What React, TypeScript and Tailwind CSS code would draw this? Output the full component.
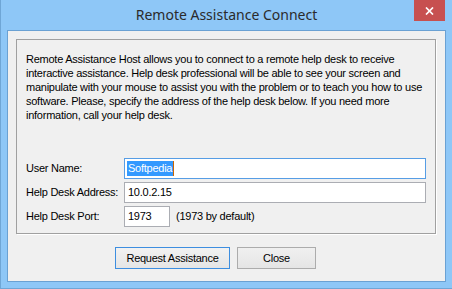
import React from 'react';

const ui = { fontFamily: '"Liberation Sans", Arial, sans-serif' };

const Field: React.FC<{ label: string; children: React.ReactNode }> = ({ label, children }) => (
  <div className="flex items-center h-[21px]">
    <div className="w-[99px] pl-[1px] text-[11px] text-black tracking-[-0.25px]">{label}</div>
    {children}
  </div>
);

const App: React.FC = () => {
  return (
    <div className="w-[452px] h-[289px] bg-[#8ec7f7] flex flex-col overflow-hidden border-l border-b border-[#6fa6d6]" style={ui}>
      {/* Title bar */}
      <div className="relative h-[30px] shrink-0 flex items-center justify-center">
        <span className="text-[14px] text-[#2b2b2b] -mt-[1px]" style={{ fontFamily: '"Noto Sans", "Open Sans", sans-serif' }}>
          Remote Assistance Connect
        </span>
        <div className="absolute right-[7px] top-0 w-[31px] h-[21px] bg-[#c75050] flex items-center justify-center">
          <svg width="9" height="8" viewBox="0 0 9 8">
            <path d="M1 0.5 L8 7.5 M8 0.5 L1 7.5" stroke="white" strokeWidth="1.7" />
          </svg>
        </div>
      </div>

      {/* Client area */}
      <div className="mx-[6px] h-[252px] border border-[#6aa1d3] bg-[#f0f0f0] flex flex-col">
        <div className="mt-[8px] ml-[8px] w-[420px] h-[195px] border border-[#a0a0a0] shadow-[1px_1px_0_#ffffff] flex flex-col">
          <p className="mt-[12px] ml-[9px] text-[11px] leading-[14px] text-black whitespace-nowrap tracking-[-0.25px]">
            Remote Assistance Host allows you to connect to a remote help desk to receive<br />
            interactive assistance. Help desk professional will be able to see your screen and<br />
            manipulate with your mouse to assist you with the problem or to teach you how to use<br />
            software. Please, specify the address of the help desk below. If you need more<br />
            information, call your help desk.
          </p>

          <div className="mt-[36px] ml-[8px] flex flex-col gap-[3px]">
            <Field label="User Name:">
              <div className="w-[302px] h-[21px] border border-[#569de5] bg-white flex items-center pl-[2px]">
                <span className="bg-[#3399ff] text-white text-[11px] leading-[15px] px-[1px] tracking-[-0.25px]">Softpedia</span>
                <span className="w-[1px] h-[15px] bg-[#cc6600]" />
              </div>
            </Field>
            <Field label="Help Desk Address:">
              <div className="w-[302px] h-[21px] border border-[#abadb3] bg-white flex items-center pl-[3px] text-[11px] text-black tracking-[-0.25px]">
                10.0.2.15
              </div>
            </Field>
            <Field label="Help Desk Port:">
              <div className="w-[46px] h-[21px] border border-[#abadb3] bg-white flex items-center pl-[3px] text-[11px] text-black tracking-[-0.25px]">
                1973
              </div>
              <span className="ml-[6px] text-[11px] text-black tracking-[-0.25px]">(1973 by default)</span>
            </Field>
          </div>
        </div>

        <div className="mt-[13px] ml-[107px] flex gap-[7px]">
          <button className="w-[115px] h-[22px] border border-[#3d8ee0] bg-gradient-to-b from-[#f2f2f2] to-[#e5e5e5] text-[11px] text-black tracking-[-0.25px]">
            Request Assistance
          </button>
          <button className="w-[79px] h-[22px] border border-[#acacac] bg-gradient-to-b from-[#f0f0f0] to-[#e5e5e5] text-[11px] text-black tracking-[-0.25px]">
            Close
          </button>
        </div>
      </div>
    </div>
  );
};

export default App;
